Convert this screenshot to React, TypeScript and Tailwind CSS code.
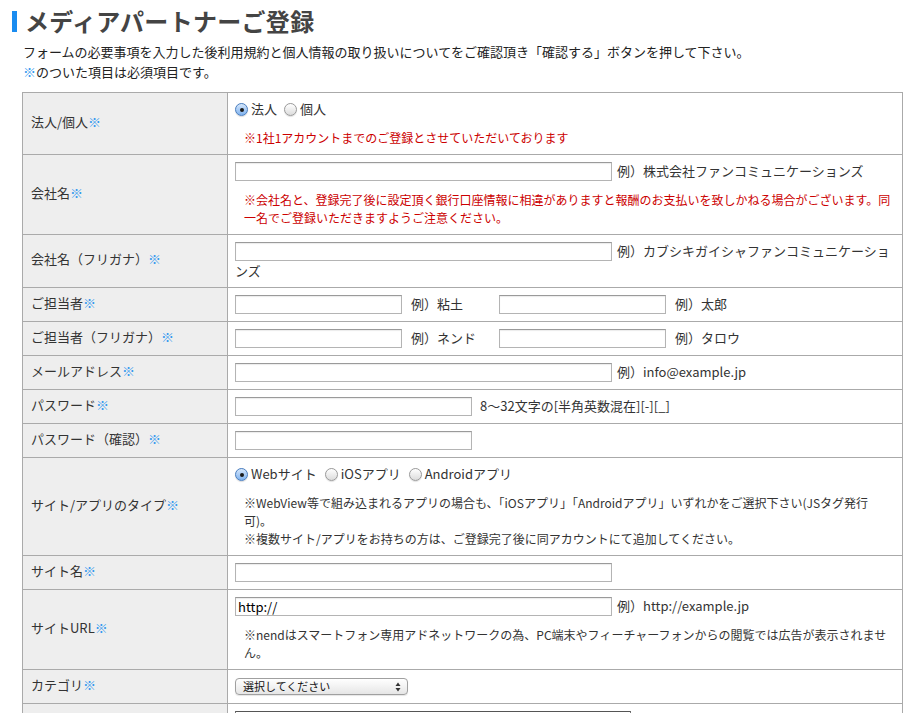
import React from "react";

const FONT = { fontFamily: '"Noto Sans CJK JP", "Noto Sans", sans-serif' };

const Req = () => <span className="text-[#3399ee]">※</span>;

const Radio = ({ checked }: { checked?: boolean }) =>
  checked ? (
    <span className="relative inline-block w-[13px] h-[13px] rounded-full border border-[#4c7fbf] bg-linear-to-b from-[#d6e7fb] to-[#7fb2ee] align-[-1px] shadow-[0_1px_1px_rgba(0,0,0,0.15)]">
      <span className="absolute left-[3.5px] top-[3.5px] w-[4px] h-[4px] rounded-full bg-[#1b1b1b]" />
    </span>
  ) : (
    <span className="inline-block w-[13px] h-[13px] rounded-full border border-[#9a9a9a] bg-linear-to-b from-[#ffffff] to-[#dcdcdc] align-[-1px] shadow-[0_1px_1px_rgba(0,0,0,0.12)]" />
  );

const Input = ({ w, value }: { w: string; value?: string }) => (
  <span
    className={`inline-block h-[19px] align-top border border-[#b4b4b4] border-t-[#9a9a9a] bg-white shadow-[inset_0_1px_1px_rgba(0,0,0,0.08)] text-[13px] leading-[17px] pl-[2px] text-black ${w}`}
  >
    {value}
  </span>
);

const Label = ({ children }: { children: React.ReactNode }) => (
  <td className="bg-[#eeeeee] border border-[#aaaaaa] pl-[8px] pr-[4px] pb-[4px] align-middle text-[13px] text-[#333]">
    {children}
  </td>
);

const Cell = ({ children }: { children: React.ReactNode }) => (
  <td className="border border-[#aaaaaa] pl-[7px] pr-[7px] py-[7px] align-top text-[13px] leading-[19px] text-[#333]">
    {children}
  </td>
);

const Line = ({ children }: { children: React.ReactNode }) => (
  <div className="whitespace-nowrap">{children}</div>
);

const T = ({ children, className = "" }: { children: React.ReactNode; className?: string }) => (
  <span className={`inline-block align-top leading-[17px] ${className}`}>{children}</span>
);

const Note = ({ children, red }: { children: React.ReactNode; red?: boolean }) => (
  <p className={`mt-[10px] text-[12px] leading-[18px] pl-[9px] whitespace-nowrap ${red ? "text-[#cc0000]" : "text-[#333]"}`}>
    {children}
  </p>
);

export default function App() {
  return (
    <div className="bg-white min-h-[713px] pl-[12px] pt-[5px]" style={FONT}>
      <h1 className="flex items-center h-[32px]">
        <span className="inline-block w-[5px] h-[21px] bg-[#1a8cf0] mr-[8px] mt-[1px]" />
        <span className="text-[24px] font-bold text-[#444] leading-[32px] tracking-[0.3px]">メディアパートナーご登録</span>
      </h1>
      <div className="ml-[11px] mt-[5px] text-[13px] leading-[20px] text-[#222]">
        <p>フォームの必要事項を入力した後利用規約と個人情報の取り扱いについてをご確認頂き「確認する」ボタンを押して下さい。</p>
        <p>
          <Req />
          のついた項目は必須項目です。
        </p>
      </div>
      <table className="ml-[10px] mt-[10px] w-[880px] table-fixed border-collapse">
        <colgroup>
          <col className="w-[205px]" />
          <col className="w-[675px]" />
        </colgroup>
        <tbody>
          <tr>
            <Label>
              法人/個人<Req />
            </Label>
            <Cell>
              <Line>
                <Radio checked />
                <T className="ml-[3px]">法人</T>
                <span className="ml-[7px]">
                  <Radio />
                </span>
                <T className="ml-[3px]">個人</T>
              </Line>
              <Note red>※1社1アカウントまでのご登録とさせていただいております</Note>
            </Cell>
          </tr>
          <tr>
            <Label>
              会社名<Req />
            </Label>
            <Cell>
              <Line>
                <Input w="w-[377px]" />
                <T className="ml-[5px]">例）株式会社ファンコミュニケーションズ</T>
              </Line>
              <Note red>
                ※会社名と、登録完了後に設定頂く銀行口座情報に相違がありますと報酬のお支払いを致しかねる場合がございます。同
                <br />
                一名でご登録いただきますようご注意ください。
              </Note>
            </Cell>
          </tr>
          <tr>
            <Label>
              会社名（フリガナ）<Req />
            </Label>
            <Cell>
              <Line>
                <Input w="w-[377px]" />
                <T className="ml-[5px]">例）カブシキガイシャファンコミュニケーショ</T>
              </Line>
              <div>ンズ</div>
            </Cell>
          </tr>
          <tr>
            <Label>
              ご担当者<Req />
            </Label>
            <Cell>
              <Line>
                <Input w="w-[167px]" />
                <T className="ml-[9px] w-[88px]">例）粘土</T>
                <Input w="w-[167px]" />
                <T className="ml-[9px]">例）太郎</T>
              </Line>
            </Cell>
          </tr>
          <tr>
            <Label>
              ご担当者（フリガナ）<Req />
            </Label>
            <Cell>
              <Line>
                <Input w="w-[167px]" />
                <T className="ml-[9px] w-[88px]">例）ネンド</T>
                <Input w="w-[167px]" />
                <T className="ml-[9px]">例）タロウ</T>
              </Line>
            </Cell>
          </tr>
          <tr>
            <Label>
              メールアドレス<Req />
            </Label>
            <Cell>
              <Line>
                <Input w="w-[377px]" />
                <T className="ml-[5px]">例）info@example.jp</T>
              </Line>
            </Cell>
          </tr>
          <tr>
            <Label>
              パスワード<Req />
            </Label>
            <Cell>
              <Line>
                <Input w="w-[237px]" />
                <T className="ml-[8px]">8〜32文字の[半角英数混在][-][_]</T>
              </Line>
            </Cell>
          </tr>
          <tr>
            <Label>
              パスワード（確認）<Req />
            </Label>
            <Cell>
              <Line>
                <Input w="w-[237px]" />
              </Line>
            </Cell>
          </tr>
          <tr>
            <Label>
              サイト/アプリのタイプ<Req />
            </Label>
            <Cell>
              <Line>
                <Radio checked />
                <T className="ml-[3px]">Webサイト</T>
                <span className="ml-[8px]">
                  <Radio />
                </span>
                <T className="ml-[3px]">iOSアプリ</T>
                <span className="ml-[8px]">
                  <Radio />
                </span>
                <T className="ml-[3px]">Androidアプリ</T>
              </Line>
              <Note>
                ※WebView等で組み込まれるアプリの場合も、「iOSアプリ」「Androidアプリ」いずれかをご選択下さい(JSタグ発行
                <br />
                可)。
                <br />
                ※複数サイト/アプリをお持ちの方は、ご登録完了後に同アカウントにて追加してください。
              </Note>
            </Cell>
          </tr>
          <tr>
            <Label>
              サイト名<Req />
            </Label>
            <Cell>
              <Line>
                <Input w="w-[377px]" />
              </Line>
            </Cell>
          </tr>
          <tr>
            <Label>
              サイトURL<Req />
            </Label>
            <Cell>
              <Line>
                <Input w="w-[377px]" value="http://" />
                <T className="ml-[5px]">例）http://example.jp</T>
              </Line>
              <Note>
                ※nendはスマートフォン専用アドネットワークの為、PC端末やフィーチャーフォンからの閲覧では広告が表示されませ
                <br />
                ん。
              </Note>
            </Cell>
          </tr>
          <tr>
            <Label>
              カテゴリ<Req />
            </Label>
            <Cell>
              <div className="h-[19px] flex items-center">
                <span className="relative inline-flex items-center w-[173px] h-[17px] rounded-[4px] border border-[#a0a0a0] bg-linear-to-b from-[#ffffff] to-[#e6e6e6] shadow-[0_1px_1px_rgba(0,0,0,0.1)] pl-[7px] text-[11px] text-[#111] leading-[15px]">
                  選択してください
                  <svg className="absolute right-[6px] top-[3px]" width="6" height="10" viewBox="0 0 6 10">
                    <path d="M3 0.5 L5.5 4 L0.5 4 Z" fill="#333" />
                    <path d="M3 9.5 L5.5 6 L0.5 6 Z" fill="#333" />
                  </svg>
                </span>
              </div>
            </Cell>
          </tr>
          <tr>
            <Label>
              <span className="block pt-[140px]">
                サイト概要<Req />
              </span>
            </Label>
            <Cell>
              <div>
                <span className="block w-[396px] h-[100px] border border-[#777] border-t-[#555] bg-white" />
              </div>
            </Cell>
          </tr>
        </tbody>
      </table>
    </div>
  );
}
